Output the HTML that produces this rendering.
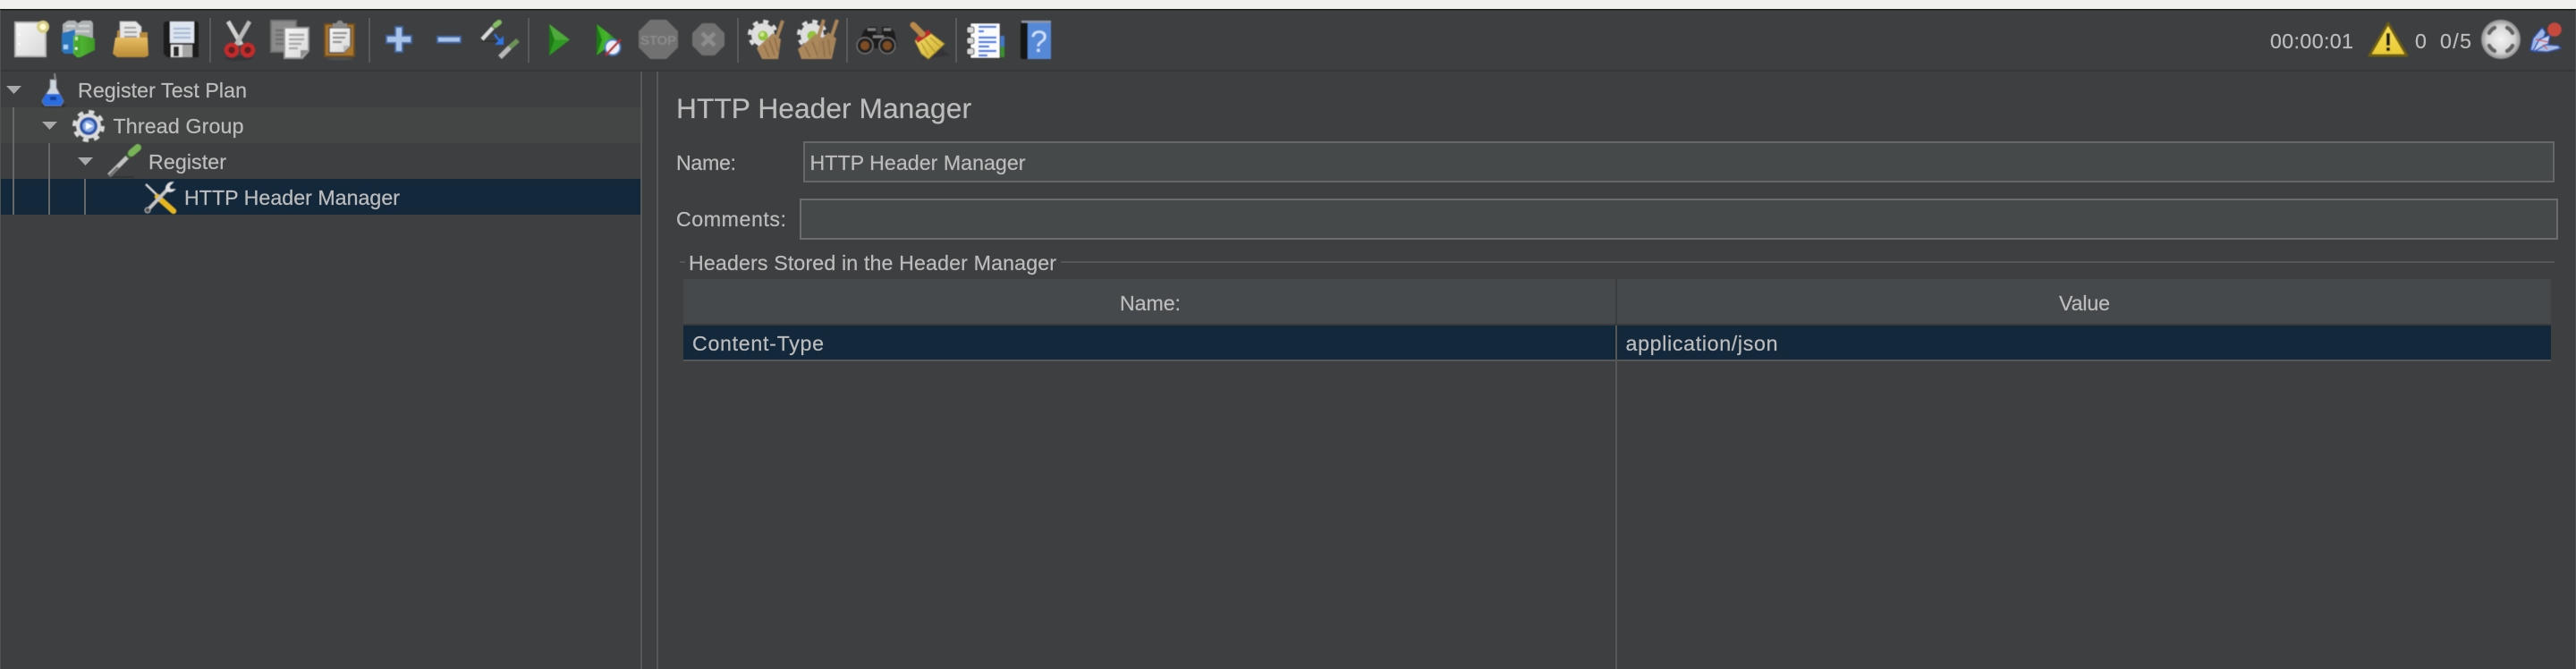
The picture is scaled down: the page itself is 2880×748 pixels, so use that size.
<!DOCTYPE html>
<html lang="en">
<head>
<meta charset="utf-8">
<title>HTTP Header Manager</title>
<style>
html,body{margin:0;padding:0;background:#3e3f41;width:2880px;height:748px;overflow:hidden}
svg{display:block;position:absolute;left:0;top:0}
text{font-family:"Liberation Sans",Arial,sans-serif;fill:#bcbcbc;stroke:#bcbcbc;stroke-width:.22px;font-size:23.2px;filter:url(#txt)}
.ic{filter:url(#soft)}
.ic text{filter:none;stroke:none}
</style>
</head>
<body>
<svg width="2880" height="748" viewBox="0 0 2880 748" xmlns="http://www.w3.org/2000/svg">
<defs>
<filter id="soft" x="-5%" y="-5%" width="110%" height="110%"><feGaussianBlur stdDeviation="0.55"/></filter>
<filter id="txt" x="-5%" y="-20%" width="110%" height="140%"><feGaussianBlur stdDeviation="0.3"/></filter>
<linearGradient id="paper" x1="0" y1="0" x2="1" y2="1"><stop offset="0" stop-color="#f6f6f6"/><stop offset="1" stop-color="#d8d8d8"/></linearGradient>
<linearGradient id="fold" x1="0" y1="0" x2="0" y2="1"><stop offset="0" stop-color="#e8bd62"/><stop offset="1" stop-color="#b98b36"/></linearGradient>
<linearGradient id="grn" x1="0" y1="0" x2="1" y2="0"><stop offset="0" stop-color="#58c23a"/><stop offset="1" stop-color="#3f9a26"/></linearGradient>
<linearGradient id="play" x1="0" y1="0" x2="1" y2="0"><stop offset="0" stop-color="#35a91f"/><stop offset="0.5" stop-color="#46b52e"/><stop offset="1" stop-color="#1f6e16"/></linearGradient>
<radialGradient id="globe"><stop offset="0" stop-color="#f4f4f4"/><stop offset="0.7" stop-color="#d4d4d4"/><stop offset="1" stop-color="#8f8f8f"/></radialGradient>
<linearGradient id="yel" x1="0" y1="0" x2="1" y2="1"><stop offset="0" stop-color="#f2de6a"/><stop offset="1" stop-color="#cfae2e"/></linearGradient>
<linearGradient id="warn" x1="0" y1="0" x2="0" y2="1"><stop offset="0" stop-color="#f6e05a"/><stop offset="1" stop-color="#e9c933"/></linearGradient>
</defs>

<!-- chrome -->
<rect x="0" y="0" width="2880" height="10" fill="#f0f0ee"/>
<rect x="0" y="10" width="2880" height="1.5" fill="#1c1c1c"/>
<rect x="0" y="78" width="2880" height="2" fill="#353739"/>
<rect x="0" y="11" width="1" height="737" fill="#505152"/>
<rect x="2879" y="11" width="1" height="737" fill="#505152"/>
<g fill="#57595b">
<rect x="234" y="20" width="2" height="50"/><rect x="412" y="20" width="2" height="50"/><rect x="590" y="20" width="2" height="50"/><rect x="824" y="20" width="2" height="50"/><rect x="946" y="20" width="2" height="50"/><rect x="1068" y="20" width="2" height="50"/>
</g>

<!-- tree -->
<rect x="1" y="120" width="715" height="40" fill="#444646"/>
<rect x="1" y="200" width="715" height="40" fill="#14283c"/>
<g fill="#666768">
<rect x="14" y="120" width="2" height="120"/><rect x="54" y="160" width="2" height="80"/><rect x="94" y="200" width="2" height="40"/>
</g>
<g fill="#a9a9a9">
<path d="M7 96H24L15.500 105Z"/><path d="M47 136H64L55.500 145Z"/><path d="M87 176H104L95.500 185Z"/>
</g>
<text x="87" y="109" textLength="189">Register Test Plan</text>
<text x="126.500" y="149" textLength="146">Thread Group</text>
<text x="166" y="189" textLength="87">Register</text>
<text x="206" y="229" textLength="241">HTTP Header Manager</text>

<!-- split -->
<rect x="716" y="80" width="2" height="668" fill="#565758"/>
<rect x="734" y="80" width="2" height="668" fill="#565758"/>

<!-- form -->
<text x="756" y="132" textLength="330" style="font-size:31.700px">HTTP Header Manager</text>
<text x="756" y="190" textLength="67">Name:</text>
<rect x="899" y="159" width="1956" height="44" fill="#45494a" stroke="#666768" stroke-width="2"/>
<text x="905.500" y="190" textLength="241">HTTP Header Manager</text>
<text x="756" y="253" textLength="123">Comments:</text>
<rect x="895" y="223" width="1964" height="44" fill="#45494a" stroke="#6b6c6d" stroke-width="2"/>

<rect x="760" y="292" width="6" height="2" fill="#555657"/>
<rect x="1186" y="292" width="1670" height="2" fill="#555657"/>
<text x="770" y="302" textLength="411">Headers Stored in the Header Manager</text>

<!-- table -->
<rect x="764" y="312" width="2088" height="50" fill="#45494b"/>
<rect x="764" y="362" width="2088" height="2" fill="#38393b"/>
<rect x="764" y="364" width="2088" height="38" fill="#14283c"/>
<rect x="764" y="402" width="2088" height="2" fill="#555657"/>
<rect x="1806" y="312" width="2" height="50" fill="#3a3c3e"/>
<rect x="1806" y="364" width="2" height="384" fill="#555657"/>
<text x="1252" y="347" textLength="68">Name:</text>
<text x="2302" y="347" textLength="57">Value</text>
<text x="774" y="392" textLength="147">Content-Type</text>
<text x="1817.500" y="392" textLength="170">application/json</text>

<!-- status -->
<text x="2538" y="54" textLength="93">00:00:01</text>
<text x="2700" y="54" textLength="13">0</text>
<text x="2728" y="54" textLength="35">0/5</text>

<!-- toolbar icons -->
<g class="ic">
<!-- new -->
<rect x="17" y="25" width="34" height="38" fill="url(#paper)" stroke="#b5b5b5" stroke-width="2"/>
<circle cx="48" cy="30" r="7" fill="#d8cf84"/><circle cx="48" cy="30" r="3.500" fill="#fffbd8"/>
<circle cx="21.500" cy="39" r="1.300" fill="#fff"/><circle cx="21.500" cy="49" r="1.300" fill="#fff"/>

<!-- templates -->
<path d="M70 42V27L76 23H84L87 26L92 23H102L104 26V44Z" fill="#adb1b3"/>
<path d="M74 29H84M88 29H100M74 35H100" stroke="#d2d2d2" stroke-width="2.500"/>
<path d="M69 37L84 33V60L72 60L69 57Z" fill="#2a76bd"/>
<path d="M71 50h5v5h-5z" fill="#a9d3f3"/>
<path d="M82 40L90 39L106 43V56L90 64H86L82 60Z" fill="url(#grn)"/>
<rect x="83" y="40" width="7" height="22" fill="#4aa82e"/>
<rect x="84" y="41" width="3" height="4" fill="#bfe9a5"/><rect x="84" y="53" width="2.500" height="2.500" fill="#fff"/>

<!-- open -->
<path d="M134 24H152L158 30V48H134Z" fill="#e6e6e6" stroke="#a4a4a4"/>
<path d="M139 31H152M139 36H153M139 41H153" stroke="#9b9b9b" stroke-width="2"/>
<path d="M131 34H134V46H156V36H165V63H130Z" fill="#b58a3c"/>
<path d="M129 42H165L166 62L162 64H131L126 60Z" fill="url(#fold)"/>

<!-- save -->
<path d="M183 26L185 24H220L222 26V64H187L183 60Z" fill="#1e1e1e"/>
<rect x="190" y="24" width="27" height="24" fill="#dfe5ee"/>
<path d="M194 32H213M194 37H213M194 42H213" stroke="#a6b9d6" stroke-width="2.200"/>
<rect x="191" y="50" width="24" height="14" fill="#a5a5a5"/>
<rect x="191" y="50" width="13" height="14" fill="#e2e2e2"/>
<rect x="194" y="52" width="6" height="11" fill="#2a2a2a"/>

<!-- cut -->
<ellipse cx="267" cy="65" rx="16" ry="3" fill="#333537"/>
<path d="M255 24L270 50" stroke="#d1d1d1" stroke-width="5"/>
<path d="M279 24L264 50" stroke="#b9b9b9" stroke-width="5"/>
<circle cx="259" cy="56" r="6" fill="#5a2424" stroke="#c52a2a" stroke-width="4.500"/>
<circle cx="277" cy="56" r="6" fill="#5a2424" stroke="#c52a2a" stroke-width="4.500"/>

<!-- copy -->
<rect x="303" y="23" width="28" height="35" fill="#8b8b8b" stroke="#6f6f6f" stroke-width="2"/>
<path d="M308 34H326M308 39H326M308 44H326M308 49H326" stroke="#717171" stroke-width="2.400"/>
<path d="M318 31H345V57L338 65H318Z" fill="url(#paper)" stroke="#979797" stroke-width="2"/>
<path d="M323 39H340M323 44H340M323 49H337M323 54H333" stroke="#a9a9a9" stroke-width="2.400"/>
<path d="M336 65V56H345Z" fill="#8d8d8d"/>

<!-- paste -->
<rect x="363" y="27" width="33" height="36" fill="#a8752a" stroke="#6d4d22" stroke-width="2"/>
<ellipse cx="380" cy="66" rx="15" ry="1.500" fill="#4c4f4e"/>
<path d="M368 31H392V51L384 59H368Z" fill="url(#paper)" stroke="#555" stroke-width="1.500"/>
<path d="M372 37H388M372 42H386M372 47H382" stroke="#8f8f8f" stroke-width="2.200"/>
<path d="M384 59V51H392Z" fill="#b9b9b9"/>
<path d="M372 31V26H376L378 23H382L384 26H388V31Z" fill="#8a8a8a"/>

<!-- plus -->
<path d="M442 30H450V40H460V48H450V58H442V48H432V40H442Z" fill="#aac3e8" stroke="#3e67a6" stroke-width="2"/>
<!-- minus -->
<rect x="489" y="41" width="26" height="6.500" fill="#aac3e8" stroke="#3e67a6" stroke-width="2"/>

<!-- toggle -->
<path d="M539 44L551 31" stroke="#d9d9d9" stroke-width="4.500"/>
<path d="M551 31L556 27" stroke="#5a7f4a" stroke-width="5"/>
<path d="M554 28L558 25" stroke="#87bd66" stroke-width="6" stroke-linecap="round"/>
<path d="M538 46H560" stroke="#2f3032" stroke-width="2"/>
<path d="M553 38C555 42 558 45 561 46" stroke="#2f76e6" stroke-width="2.500" fill="none"/>
<path d="M563 40V50H553Z" fill="#2f76e6"/>
<path d="M559 64L570 53" stroke="#b8b8b8" stroke-width="5.500"/>
<path d="M570 53L579 45" stroke="#6d9457" stroke-width="5.500"/>

<!-- play -->
<path d="M614 27L637 44.500L614 62Z" fill="url(#play)"/>
<path d="M614 27L637 44.500H620Z" fill="#4eaa3b"/>
<path d="M614 62L637 44.500H620Z" fill="#2e9a22"/>
<path d="M614 27V62L620 44.500Z" fill="#1f7a18"/>

<!-- play no pause -->
<path d="M667 27L690 44.500L667 62Z" fill="url(#play)"/>
<path d="M667 27V62L673 44.500Z" fill="#1f7a18"/>
<circle cx="685" cy="53" r="8.500" fill="#e9eef7" stroke="#4a7dc6" stroke-width="2"/>
<path d="M677 62L694 44" stroke="#b92c2c" stroke-width="2.500"/>

<!-- stop -->
<path d="M727 22H745L758 35V53L745 66H727L714 53V35Z" fill="#717171"/>
<text x="716" y="50" textLength="40" style="font-size:15px;font-weight:bold;fill:#8a8a8a">STOP</text>

<!-- shutdown -->
<path d="M785 26H799L810 37V51L799 62H785L774 51V37Z" fill="#717171"/>
<path d="M785 37L799 51M799 37L785 51" stroke="#8c8c8c" stroke-width="4.500"/>

<!-- clear -->
<circle cx="853" cy="39" r="13" fill="#dedede"/>
<circle cx="853" cy="39" r="15" fill="none" stroke="#dedede" stroke-width="4" stroke-dasharray="5.900 5.900"/>
<circle cx="853" cy="40" r="5.500" fill="#93c33a"/>
<circle cx="852" cy="38.500" r="2.500" fill="#cfe88a"/>
<path d="M875 23L869 41" stroke="#a88456" stroke-width="4"/>
<path d="M864 37L873 44L870 66H852L846 54Z" fill="#ab875c"/>
<path d="M854 50L860 64M860 45L866 62M866 42L870 58" stroke="#8d6c44" stroke-width="1.500"/>

<!-- clear all -->
<circle cx="908" cy="39" r="13" fill="#dedede"/>
<circle cx="908" cy="39" r="15" fill="none" stroke="#dedede" stroke-width="4" stroke-dasharray="5.900 5.900"/>
<circle cx="908" cy="40" r="5.500" fill="#93c33a"/>
<path d="M921 22L915 41" stroke="#a88456" stroke-width="4"/>
<path d="M936 22L930 40" stroke="#a88456" stroke-width="4"/>
<path d="M912 38L921 43L918 66H896L892 55Z" fill="#ab875c"/>
<path d="M926 36L935 43L930 66H912L916 46Z" fill="#a5825a"/>
<path d="M900 52L906 64M908 46L914 62M920 46L922 64M926 44L928 62" stroke="#8d6c44" stroke-width="1.500"/>

<!-- binoculars -->
<path d="M966 34L972 30H980V38H986V30H994L1000 36L1003 52L994 60L984 54H976L967 60L958 52Z" fill="#1c1c1c"/>
<path d="M970 33H979M988 33H996M976 41H988" stroke="#7e7e7e" stroke-width="3"/>
<circle cx="967" cy="51" r="9" fill="#242424" stroke="#6e6e6e" stroke-width="1.500"/>
<circle cx="992" cy="51" r="9" fill="#242424" stroke="#6e6e6e" stroke-width="1.500"/>
<circle cx="967" cy="51" r="5" fill="#7f4d21"/><circle cx="992" cy="51" r="5" fill="#7f4d21"/>

<!-- broom -->
<path d="M1030 66L1062 62L1050 52Z" fill="#2e2f31" opacity=".6"/>
<path d="M1027 40L1039 36L1056 49L1038 66L1030 60L1023 46Z" fill="url(#yel)" stroke="#9a8526"/>
<path d="M1034 44L1046 59M1030 48L1038 62M1040 42L1051 52" stroke="#b89c2e" stroke-width="1.500"/>
<path d="M1023 43L1038 33L1041 38L1026 48Z" fill="#bb2b2b"/>
<path d="M1031 38L1021 28" stroke="#b98a49" stroke-width="7" stroke-linecap="round"/>

<!-- log -->
<rect x="1118" y="40" width="5" height="12" fill="#3f78c9"/><rect x="1118" y="52" width="5" height="12" fill="#37912c"/>
<rect x="1085" y="26" width="33" height="39" fill="#fbfbfb" stroke="#303030"/>
<g fill="#d5d5d5" stroke="#2a2a2a"><rect x="1081" y="30" width="8" height="7" rx="2"/><rect x="1081" y="42" width="8" height="7" rx="2"/><rect x="1081" y="54" width="8" height="7" rx="2"/></g>
<path d="M1094 30H1114M1094 42H1114M1094 47H1114M1094 57H1114" stroke="#3574e2" stroke-width="2.200"/>
<path d="M1094 35H1100M1094 52H1106M1094 62H1104" stroke="#3574e2" stroke-width="2.200"/>

<!-- help -->
<rect x="1141" y="24" width="9" height="42" rx="2" fill="#191919"/>
<rect x="1149" y="25" width="26" height="41" fill="#5589d8"/>
<rect x="1142" y="23" width="33" height="2.500" fill="#8d97a4"/>
<text x="1152" y="58" style="font-size:34px;fill:#cfe0f8">?</text>

<!-- warning -->
<path d="M2670 26L2691 62H2649Z" fill="url(#warn)" stroke="#6b5b18" stroke-width="3" stroke-linejoin="round"/>
<rect x="2668" y="37" width="4" height="14" fill="#1d1d1d"/><rect x="2668" y="53" width="4" height="4" fill="#1d1d1d"/>

<!-- globe -->
<circle cx="2796" cy="44" r="22" fill="url(#globe)"/>
<g fill="none" stroke="#606060" stroke-width="4.500" stroke-linecap="round">
<path d="M2783 37Q2785 33 2789 31"/><path d="M2803 31Q2807 33 2809 37"/><path d="M2809 51Q2807 55 2803 57"/><path d="M2789 57Q2785 55 2783 51"/>
</g>

<!-- feather -->
<path d="M2829 56L2832 43L2842 31L2846 36L2841 50L2834 57Z" fill="#9fb8e6" stroke="#2f53b4" stroke-width="1.500"/>
<path d="M2832 57L2839 44L2851 39L2849 49L2838 58Z" fill="#c4d5f0" stroke="#2f53b4" stroke-width="1.500"/>
<path d="M2834 57L2846 50L2860 51L2863 54L2848 58Z" fill="#a8bde3" stroke="#3658b2" stroke-width="1.500"/>
<path d="M2835 44L2849 47M2843 50L2848 55" stroke="#d43a3a" stroke-width="1.200"/>
<circle cx="2856" cy="33" r="7.800" fill="#c64a3e"/>
</g>

<!-- tree icons -->
<g class="ic">
<!-- flask -->
<ellipse cx="60" cy="118" rx="14" ry="2" fill="#2c2d2f"/>
<path d="M56 89H63V98L71 113L68 118H50L47 113L56 98Z" fill="#cdd5de" stroke="#858a90"/>
<path d="M61 82L62 90" stroke="#8c8c8c" stroke-width="2"/>
<path d="M51 105H67L71 113L68 118H50L47 113Z" fill="#2a6de0"/>
<path d="M56 108h7v4h-7z" fill="#123f9c"/>

<!-- gear -->
<circle cx="99" cy="141" r="14" fill="#dcdcdc"/>
<circle cx="99" cy="141" r="16" fill="none" stroke="#dcdcdc" stroke-width="4" stroke-dasharray="6.280 6.280"/>
<circle cx="99" cy="141" r="10" fill="#2f55a8"/>
<circle cx="99" cy="141" r="6.500" fill="#8fb0e6"/>
<path d="M96 137L104 141L96 145Z" fill="#fff"/>

<!-- dropper -->
<path d="M122 198H150" stroke="#333436" stroke-width="2"/>
<path d="M122 196L144 174" stroke="#c3c3c3" stroke-width="5"/>
<path d="M122 197L132 187" stroke="#6f6f6f" stroke-width="3"/>
<path d="M142 176L148 170" stroke="#3f5f38" stroke-width="6"/>
<path d="M147 171L154 165" stroke="#78b455" stroke-width="8" stroke-linecap="round"/>

<!-- tools -->
<path d="M163 206L186 228" stroke="#d8d8d8" stroke-width="2.500"/>
<path d="M176 220L194 236" stroke="#e6b71f" stroke-width="6.500" stroke-linecap="round"/>
<path d="M165 235L188 211" stroke="#c4c4c4" stroke-width="4"/>
<path d="M186 213A7 7 0 0 1 193 204L189 208L190 212L195 212A7 7 0 0 1 186 213Z" fill="#e0e0e0" stroke="#dedede" stroke-width="1.500"/>
<circle cx="165" cy="235" r="3" fill="#4f4f4f" stroke="#bbb"/>
</g>
</svg>
</body>
</html>
